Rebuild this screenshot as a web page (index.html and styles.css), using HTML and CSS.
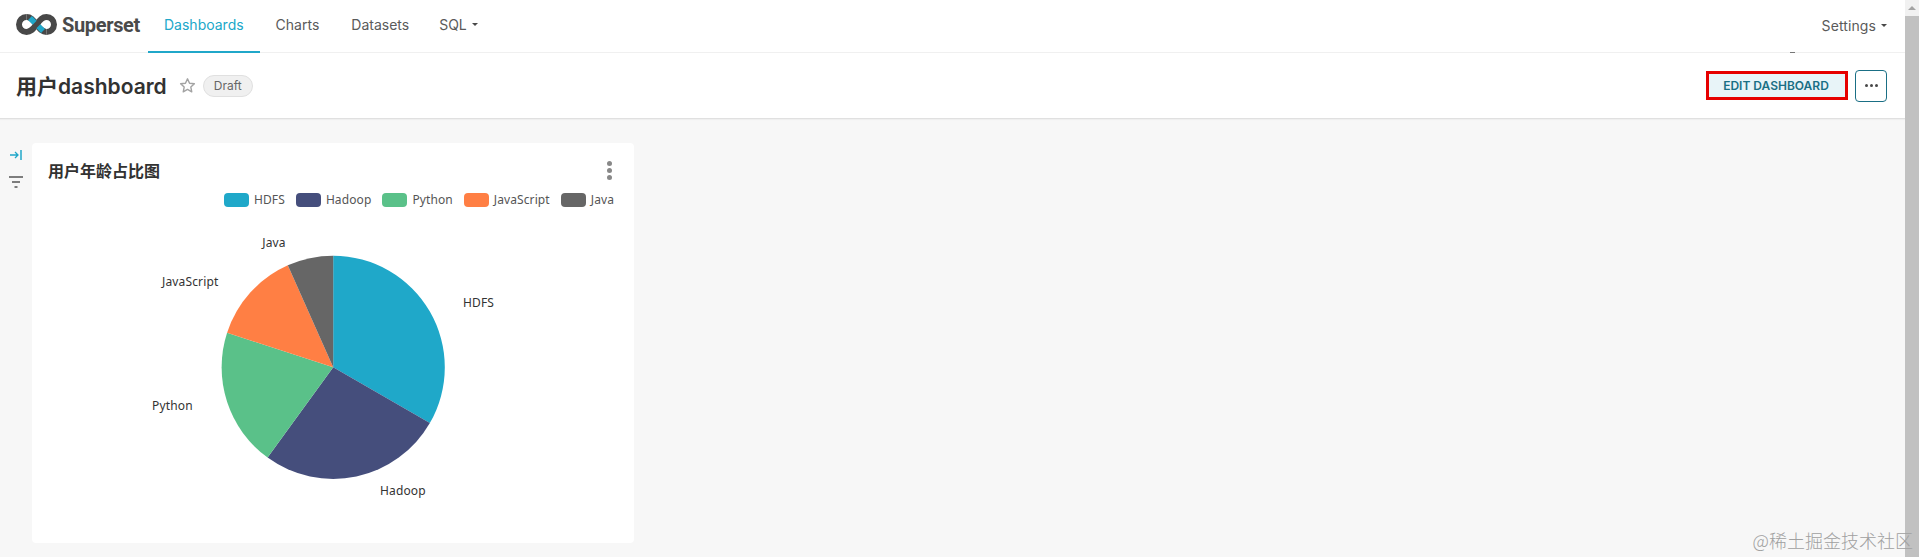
FILE: index.html
```html
<!DOCTYPE html>
<html lang="en">
<head>
    <meta charset="UTF-8">
    <meta name="viewport" content="width=device-width, initial-scale=1.0">
    <title>用户dashboard</title>
    <link rel="stylesheet" href="styles.css">
</head>
<body>
    <div class="page">
        <!-- Top navigation -->
        <nav class="navbar">
            <a class="brand">
                <svg class="brand-icon" width="41" height="21" viewBox="0 0 41 21" fill="none" stroke-width="6">
                    <path d="M10.5 3C15 3 17 6 20.5 10.5C24 15 26 18 30.5 18" stroke="#484848"/>
                    <path d="M10.5 3A7.5 7.5 0 0 0 10.5 18C15 18 17 15 20.5 10.5C24 6 26 3 30.5 3A7.5 7.5 0 0 1 30.5 18" stroke="#484848"/>
                    <path d="M14 4L18.7 8.7M22.3 12.3L27 17" stroke="#20a7c9" stroke-width="5.5"/>
                </svg>
                <span class="brand-name">Superset</span>
            </a>
            <ul class="tabs">
                <li class="tab active">Dashboards</li>
                <li class="tab">Charts</li>
                <li class="tab">Datasets</li>
                <li class="tab tab-sql">SQL <span class="caret"></span></li>
            </ul>
            <div class="settings">Settings <span class="caret"></span></div>
            <span class="nav-speck"></span>
        </nav>

        <!-- Dashboard header -->
        <header class="dash-header">
            <h1 class="dash-title">用户dashboard</h1>
            <svg class="star" width="17" height="17" viewBox="0 0 24 24" fill="none" stroke="#a3a3a3" stroke-width="2" stroke-linejoin="round">
                <path d="M12 2.6l2.9 6.2 6.8.8-5 4.6 1.3 6.7-6-3.3-6 3.3 1.3-6.7-5-4.6 6.8-.8z"/>
            </svg>
            <span class="tag">Draft</span>
            <div class="dash-actions">
                <button class="edit-btn">EDIT DASHBOARD</button>
                <button class="more-btn"><i></i><i></i><i></i></button>
            </div>
        </header>

        <main class="content">
            <aside class="filter-rail">
                <svg width="14" height="12" viewBox="0 0 14 12" fill="none" stroke="#20a7c9" stroke-width="1.3">
                    <path d="M1 6H9M6 3l3 3-3 3"/>
                    <path d="M12 1v10" stroke-width="1.5"/>
                </svg>
                <svg width="14" height="12" viewBox="0 0 14 12" fill="none" stroke="#555" stroke-width="1.3">
                    <path d="M0 1H14M3 6H11M5.5 11H8.5"/>
                </svg>
            </aside>

            <section class="card">
                <div class="card-head">
                    <h2 class="card-title">用户年龄占比图</h2>
                    <div class="kebab"><i></i><i></i><i></i></div>
                </div>
                <ul class="legend">
                    <li><span class="swatch c-hdfs"></span>HDFS</li>
                    <li><span class="swatch c-hadoop"></span>Hadoop</li>
                    <li><span class="swatch c-python"></span>Python</li>
                    <li><span class="swatch c-js"></span>JavaScript</li>
                    <li><span class="swatch c-java"></span>Java</li>
                </ul>
                <svg class="pie" width="602" height="336" viewBox="32 207 602 336">
                    <path d="M333.2 367.3V255.7A111.6 111.6 0 0 1 429.85 423.1Z" fill="#1fa8c9"/>
                    <path d="M333.2 367.3L429.85 423.1A111.6 111.6 0 0 1 267.6 457.6Z" fill="#454e7c"/>
                    <path d="M333.2 367.3L267.6 457.6A111.6 111.6 0 0 1 227.1 332.8Z" fill="#5ac189"/>
                    <path d="M333.2 367.3L227.1 332.8A111.6 111.6 0 0 1 287.8 265.3Z" fill="#ff7f44"/>
                    <path d="M333.2 367.3L287.8 265.3A111.6 111.6 0 0 1 333.2 255.7Z" fill="#666666"/>
                    <text x="274" y="247" text-anchor="middle">Java</text>
                    <text x="162" y="286">JavaScript</text>
                    <text x="463" y="307">HDFS</text>
                    <text x="152" y="410">Python</text>
                    <text x="380" y="495">Hadoop</text>
                </svg>
            </section>
        </main>
    </div>

    <div class="scrollbar">
        <div class="scroll-up"></div>
        <div class="scroll-thumb"></div>
    </div>

    <div class="watermark">@稀土掘金技术社区</div>
</body>
</html>
```

FILE: styles.css
```css
* {
    box-sizing: border-box;
}

body {
    font-family: Inter, "Noto Sans CJK SC", sans-serif;
    background-color: #f7f7f7;
    margin: 0;
    height: 100vh;
    display: flex;
    overflow: hidden;
    color: #484848;
}

.page {
    flex: 1;
    min-width: 0;
}

.navbar {
    position: relative;
    height: 53px;
    background-color: #fff;
    border-bottom: 1px solid #f0f0f0;
    display: flex;
    align-items: stretch;
    padding-left: 16px;
    padding-right: 18px;
}

.nav-speck {
    position: absolute;
    left: 1790px;
    top: 52px;
    width: 5px;
    height: 1px;
    background-color: #777;
}

.brand {
    display: flex;
    align-items: center;
    gap: 5px;
    width: 132px;
    padding-bottom: 3px;
}

.brand-name {
    font-family: Roboto, sans-serif;
    font-weight: 700;
    font-size: 20px;
    letter-spacing: -0.35px;
    color: #4a4a4a;
}

.tabs {
    list-style: none;
    display: flex;
    margin: 0;
    padding: 0;
}

.tab {
    display: flex;
    align-items: center;
    gap: 5px;
    padding: 0 16px;
    font-size: 14px;
    color: #5a5a5a;
    height: 53px;
    padding-bottom: 2px;
    border-bottom: 2px solid transparent;
}

.tab-sql {
    margin-left: -2px;
}

.tab.active {
    color: #20a7c9;
    border-bottom-color: #20a7c9;
}

.caret {
    display: inline-block;
    width: 0;
    height: 0;
    border-left: 3px solid transparent;
    border-right: 3px solid transparent;
    border-top: 3px solid #484848;
}

.settings {
    margin-left: auto;
    display: flex;
    align-items: center;
    gap: 5px;
    font-size: 14px;
    letter-spacing: 0.1px;
    color: #5a5a5a;
    padding-bottom: 2px;
}

.dash-header {
    height: 66px;
    background-color: #fff;
    border-bottom: 1px solid #e0e0e0;
    box-shadow: 0 1px 1px rgba(0, 0, 0, 0.03);
    display: flex;
    align-items: center;
    padding-left: 16px;
    padding-right: 18px;
}

.dash-title {
    font-size: 21px;
    font-weight: 600;
    color: #323232;
    margin: -2px 12px 0 0;
}

.star {
    margin-right: 7px;
}

.tag {
    height: 22px;
    width: 50px;
    border: 1px solid #e0e0e0;
    border-radius: 11px;
    background-color: #f0f0f0;
    color: #666;
    font-size: 12px;
    display: flex;
    align-items: center;
    justify-content: center;
}

.dash-actions {
    margin-left: auto;
    display: flex;
    align-items: center;
    gap: 7px;
}

.edit-btn {
    width: 142px;
    height: 29px;
    border: 3px solid #e60000;
    background-color: #e8f4f8;
    color: #1a6f85;
    font-family: inherit;
    font-size: 12px;
    font-weight: 600;
    padding: 0 2px 0 0;
}

.more-btn {
    width: 32px;
    height: 32px;
    border: 1px solid #1a6f85;
    border-radius: 4px;
    background-color: #fff;
    display: flex;
    align-items: center;
    justify-content: center;
    gap: 2px;
    padding: 0;
}

.more-btn i {
    width: 3px;
    height: 3px;
    border-radius: 50%;
    background-color: #484848;
}

.content {
    display: flex;
    align-items: flex-start;
    padding-top: 24px;
}

.filter-rail {
    width: 32px;
    padding-top: 6px;
    padding-left: 9px;
    display: flex;
    flex-direction: column;
    gap: 15px;
}

.card {
    width: 602px;
    height: 400px;
    background-color: #fff;
    border-radius: 4px;
}

.card-head {
    height: 50px;
    display: flex;
    align-items: center;
    justify-content: space-between;
    padding: 4px 22px 0 16px;
}

.card-title {
    font-size: 16px;
    font-weight: 600;
    color: #323232;
    margin: 0;
}

.kebab {
    display: flex;
    flex-direction: column;
    gap: 2px;
}

.kebab i {
    width: 5px;
    height: 5px;
    border-radius: 50%;
    background-color: #888;
}

.legend {
    list-style: none;
    margin: 0;
    padding: 0 20px 0 0;
    height: 14px;
    display: flex;
    justify-content: flex-end;
    gap: 11px;
    font-family: "Noto Sans", sans-serif;
    font-size: 12px;
    line-height: 14px;
    letter-spacing: 0.1px;
    color: #555;
}

.legend li {
    display: flex;
    align-items: center;
    gap: 5px;
}

.swatch {
    width: 25px;
    height: 14px;
    border-radius: 4px;
}

.c-hdfs { background-color: #1fa8c9; }
.c-hadoop { background-color: #454e7c; }
.c-python { background-color: #5ac189; }
.c-js { background-color: #ff7f44; }
.c-java { background-color: #666666; }

.pie {
    display: block;
}

.pie text {
    font-family: "Noto Sans", sans-serif;
    font-size: 12px;
    letter-spacing: 0.15px;
    fill: #333;
}

.scrollbar {
    width: 14px;
    background-color: #f1f1f1;
    display: flex;
    flex-direction: column;
}

.scroll-up {
    height: 16px;
    position: relative;
}

.scroll-up::after {
    content: "";
    position: absolute;
    left: 3px;
    top: 6px;
    border-left: 4px solid transparent;
    border-right: 4px solid transparent;
    border-bottom: 4px solid #a3a3a3;
}

.scroll-thumb {
    flex: 1;
    background-color: #c1c1c1;
}

/* sits on top of the scrollbar */
.watermark {
    position: absolute;
    right: 6px;
    bottom: 6px;
    font-family: "Noto Sans CJK SC", sans-serif;
    font-weight: 300;
    font-size: 18px;
    line-height: 22px;
    color: #a0a0a0;
}
```
